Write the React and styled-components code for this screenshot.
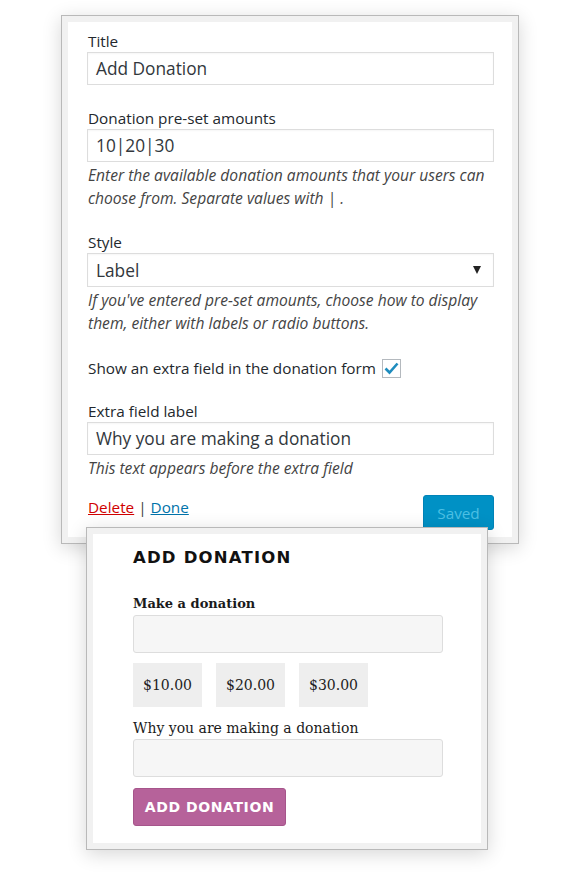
import React from "react";
import styled, { createGlobalStyle } from "styled-components";

const GlobalStyle = createGlobalStyle`
  body {
    margin: 0;
    background: #fff;
    font-family: "Open Sans", "Noto Sans", sans-serif;
  }
`;

const Page = styled.div`
  width: 569px;
  min-height: 879px;
  padding-top: 15px;
  box-sizing: border-box;
`;

const Frame = styled.div`
  position: relative;
  box-sizing: border-box;
  border: 1px solid #b9b9b9;
  background: #f1f1f1;
  padding: 6px;
  box-shadow: 0 4px 18px rgba(0, 0, 0, 0.16);
`;

const WidgetFrame = styled(Frame)`
  margin-left: 61px;
  width: 458px;
  height: 529px;
`;

const PreviewFrame = styled(Frame)`
  margin-left: 86px;
  margin-top: -17px;
  width: 402px;
  height: 323px;
  z-index: 2;
`;

const WidgetBody = styled.div`
  background: #fff;
  height: 100%;
  box-sizing: border-box;
  padding: 8px 18px 0 19px;
`;

const Field = styled.div`
  margin-bottom: ${(p) => p.$gap ?? 22}px;
`;

const Label = styled.div`
  font-size: 15.3px;
  line-height: 22px;
  color: #23282d;
  padding-left: 1px;
`;

const TextInput = styled.div`
  box-sizing: border-box;
  height: ${(p) => p.$h || 33}px;
  border: 1px solid #ddd;
  box-shadow: inset 0 1px 2px rgba(0, 0, 0, 0.04);
  padding: 0 8px;
  display: flex;
  align-items: center;
  justify-content: space-between;
  font-size: 17.3px;
  color: #32373c;
`;

const Caret = styled.span`
  width: 0;
  height: 0;
  border-left: 4px solid transparent;
  border-right: 4px solid transparent;
  border-top: 8px solid #222;
  margin-right: 4px;
`;

const Help = styled.p`
  margin: 2px 0 0 1px;
  font-size: 15.6px;
  line-height: 23px;
  font-style: italic;
  color: #444;
`;

const CheckRow = styled.div`
  display: flex;
  align-items: center;
  gap: 6px;
  font-size: 15.3px;
  line-height: 22px;
  color: #23282d;
  padding-left: 1px;
`;

const CheckBox = styled.span`
  width: 19px;
  height: 19px;
  box-sizing: border-box;
  border: 1px solid #b4b9be;
  display: flex;
  align-items: center;
  justify-content: center;
`;

const Footer = styled.div`
  display: flex;
  justify-content: space-between;
  align-items: flex-start;
  margin-top: 15px;
`;

const Links = styled.div`
  font-size: 15.3px;
  line-height: 24px;
  color: #444;
  padding-left: 1px;
`;

const Link = styled.a`
  color: ${(p) => (p.$danger ? "#d00000" : "#0073aa")};
  text-decoration: underline;
`;

const SavedButton = styled.button`
  width: 71px;
  height: 35px;
  border: 1px solid #0083b8;
  border-radius: 3px;
  background: #0091c5;
  color: #4cc0e4;
  font-family: "Open Sans", sans-serif;
  font-size: 15.3px;
  padding: 0;
`;

const PreviewBody = styled.div`
  background: #fff;
  height: 100%;
  box-sizing: border-box;
  padding: 12px 38px 0 40px;
  font-family: "DejaVu Serif", "Liberation Serif", serif;
  color: #1a1a1a;
`;

const Heading = styled.h2`
  margin: 0 0 23px;
  font-family: "DejaVu Sans", sans-serif;
  font-weight: 700;
  font-size: 16.5px;
  line-height: 24px;
  letter-spacing: 1.2px;
  color: #111;
`;

const FormLabel = styled.div`
  font-size: ${(p) => (p.$bold ? 13 : 14)}px;
  line-height: 22px;
  font-weight: ${(p) => (p.$bold ? 700 : 400)};
  margin-top: ${(p) => p.$top || 0}px;
`;

const FormInput = styled.div`
  height: 38px;
  box-sizing: border-box;
  border: 1px solid #ddd;
  border-radius: 3px;
  background: #f6f6f6;
`;

const Amounts = styled.div`
  display: flex;
  gap: 14px;
  margin-top: 10px;
`;

const Amount = styled.span`
  height: 44px;
  padding: 0 10px;
  display: flex;
  align-items: center;
  background: #eee;
  font-size: 14px;
  color: #222;
`;

const SubmitButton = styled.button`
  margin-top: 11px;
  height: 38px;
  width: 153px;
  box-sizing: border-box;
  border: 1px solid #a6558b;
  border-radius: 3px;
  background: #b6629a;
  color: #fff;
  font-family: "DejaVu Sans", sans-serif;
  font-weight: 700;
  font-size: 14px;
  letter-spacing: 0.6px;
  padding: 0;
`;

const Check = () => (
  <svg width="15" height="13" viewBox="0 0 15 13">
    <path d="M1.5 6.5 L5.5 10.5 L13.5 1.5" fill="none" stroke="#1e8cbe" strokeWidth="2.6" />
  </svg>
);

export default function App() {
  return (
    <Page>
      <GlobalStyle />
      <WidgetFrame>
        <WidgetBody>
          <Field>
            <Label>Title</Label>
            <TextInput>Add Donation</TextInput>
          </Field>
          <Field $gap={21}>
            <Label>Donation pre-set amounts</Label>
            <TextInput>10|20|30</TextInput>
            <Help>
              Enter the available donation amounts that your users can choose from. Separate values with | .
            </Help>
          </Field>
          <Field>
            <Label>Style</Label>
            <TextInput $h={34}>
              Label
              <Caret />
            </TextInput>
            <Help>
              If you've entered pre-set amounts, choose how to display them, either with labels or radio buttons.
            </Help>
          </Field>
          <Field $gap={21}>
            <CheckRow>
              Show an extra field in the donation form
              <CheckBox>
                <Check />
              </CheckBox>
            </CheckRow>
          </Field>
          <Field $gap={0}>
            <Label>Extra field label</Label>
            <TextInput>Why you are making a donation</TextInput>
            <Help>This text appears before the extra field</Help>
          </Field>
          <Footer>
            <Links>
              <Link $danger>Delete</Link> | <Link>Done</Link>
            </Links>
            <SavedButton>Saved</SavedButton>
          </Footer>
        </WidgetBody>
      </WidgetFrame>
      <PreviewFrame>
        <PreviewBody>
          <Heading>ADD DONATION</Heading>
          <FormLabel $bold>Make a donation</FormLabel>
          <FormInput />
          <Amounts>
            <Amount>$10.00</Amount>
            <Amount>$20.00</Amount>
            <Amount>$30.00</Amount>
          </Amounts>
          <FormLabel $top={10}>Why you are making a donation</FormLabel>
          <FormInput />
          <SubmitButton>ADD DONATION</SubmitButton>
        </PreviewBody>
      </PreviewFrame>
    </Page>
  );
}
